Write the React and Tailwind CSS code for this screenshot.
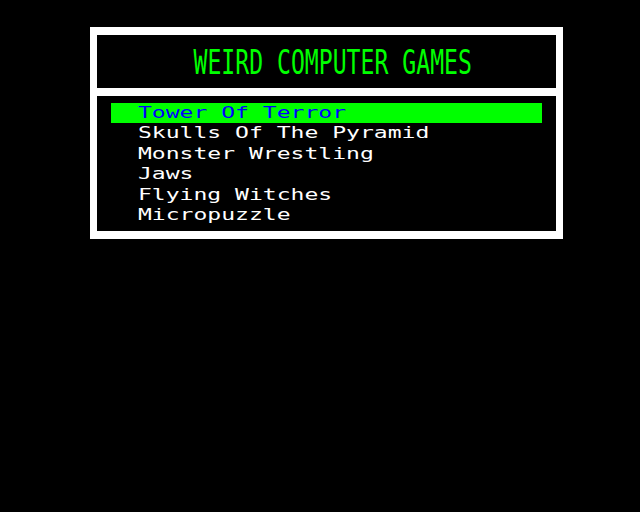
const games = [
    "Tower Of Terror",
    "Skulls Of The Pyramid",
    "Monster Wrestling",
    "Jaws",
    "Flying Witches",
    "Micropuzzle",
];

function App() {
    const mono = { fontFamily: '"DejaVu Sans Mono", "Liberation Mono", monospace' };

    return (
        <div className="w-[640px] h-[512px] bg-black pt-[27px] pl-[90px]" style={mono}>
            <div className="w-[473px] bg-white border-x-[7px] border-y-[8px] border-white flex flex-col gap-[8px]">
                <div className="h-[53px] bg-black flex items-center justify-center pl-[12px]">
                    <span className="inline-block text-[34px] leading-none text-[#00ff00] scale-x-[0.68] whitespace-pre">
                        WEIRD COMPUTER GAMES
                    </span>
                </div>
                <div className="h-[135px] bg-black pt-[7px] px-[14px] text-[16px] leading-[16px]">
                    {games.map((game, i) => (
                        <div
                            key={game}
                            className={
                                i === 0
                                    ? "h-[20px] mb-[0.4px] bg-[#00ff00] text-[#0000ff] pl-[27px] pt-[2px]"
                                    : "h-[20.4px] text-white pl-[27px] pt-[2px]"
                            }
                        >
                            <span className="inline-block origin-left scale-x-[1.44] whitespace-pre">
                                {game}
                            </span>
                        </div>
                    ))}
                </div>
            </div>
        </div>
    );
}

export default App;
